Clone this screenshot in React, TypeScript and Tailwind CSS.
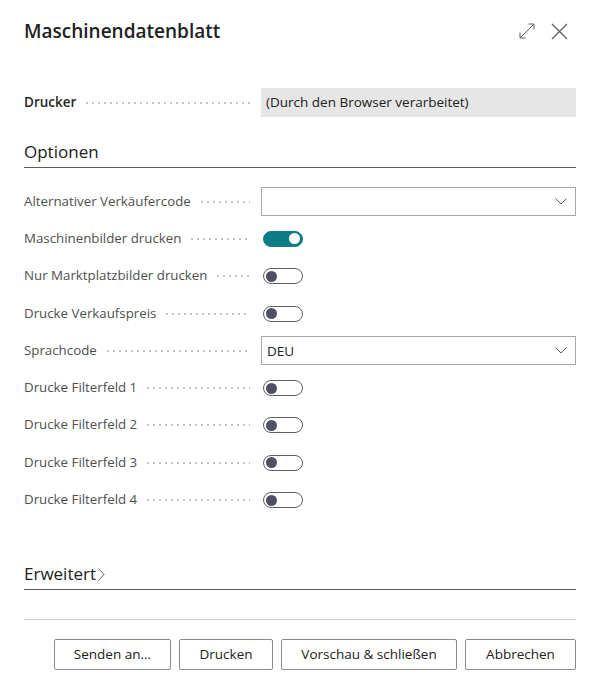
import { useState } from "react";

const font = { fontFamily: '"Segoe UI", "Open Sans", "Noto Sans", sans-serif' };

function Dots() {
  return (
    <span className="mx-2 h-[2px] flex-1 bg-[radial-gradient(circle,#c4c4c4_0.9px,transparent_1.1px)] bg-[length:6px_2px] bg-repeat-x" />
  );
}

function Label({ text, bold }: { text: string; bold?: boolean }) {
  return (
    <div className="flex w-[237px] shrink-0 items-center pr-[3px]">
      <span
        className={
          bold
            ? "text-[13.5px] font-semibold text-[#262626]"
            : "text-[13.3px] text-[#505050]"
        }
      >
        {text}
      </span>
      <Dots />
    </div>
  );
}

function Toggle({ on }: { on?: boolean }) {
  const [value, setValue] = useState(!!on);
  return (
    <button
      onClick={() => setValue(!value)}
      className={
        value
          ? "ml-[2px] flex h-[16px] w-[40px] items-center justify-end rounded-full border border-[#0e7c86] bg-[#0e7c86] px-[2px]"
          : "ml-[2px] flex h-[16px] w-[40px] items-center justify-start rounded-full border border-[#5f5f5f] bg-white px-[2px]"
      }
    >
      <span
        className={
          value
            ? "h-[11px] w-[11px] rounded-full bg-white"
            : "h-[11px] w-[11px] rounded-full bg-[#4d5263]"
        }
      />
    </button>
  );
}

function Select({ value }: { value?: string }) {
  return (
    <div className="flex h-[29px] flex-1 items-center justify-between border border-[#a8a8a8] pl-[5px] pr-[8px]">
      <span className="text-[13.5px] text-[#212121]">{value ?? ""}</span>
      <svg width="12" height="7" viewBox="0 0 12 7" fill="none">
        <path d="M0.5 0.5 L6 6 L11.5 0.5" stroke="#5f5f5f" strokeWidth="1" />
      </svg>
    </div>
  );
}

function Row({ label, children }: { label: string; children: React.ReactNode }) {
  return (
    <div className="flex h-[37.3px] items-center">
      <Label text={label} />
      {children}
    </div>
  );
}

export default function App() {
  const buttons = [
    { text: "Senden an...", w: "w-[117px]" },
    { text: "Drucken", w: "w-[94px]" },
    { text: "Vorschau & schließen", w: "w-[176px]" },
    { text: "Abbrechen", w: "w-[111px]" },
  ];

  return (
    <div style={font} className="flex h-[694px] w-[599px] flex-col bg-white pl-6 pr-[23px]">
      {/* HEADER */}
      <div className="flex items-center justify-between pt-[19px]">
        <h1 className="text-[19px] leading-[24px] font-semibold text-[#212121]">
          Maschinendatenblatt
        </h1>
        <div className="mr-[8px] flex items-center gap-[16px]">
          <svg width="16" height="16" viewBox="0 0 16 16" fill="none" stroke="#616161" strokeWidth="1">
            <path d="M1 15 L15 1 M9.5 1 H15 V6.5 M1 9.5 V15 H6.5" />
          </svg>
          <svg width="17" height="17" viewBox="0 0 17 17" fill="none" stroke="#616161" strokeWidth="1.4">
            <path d="M1 1 L16 16 M16 1 L1 16" />
          </svg>
        </div>
      </div>

      {/* DRUCKER */}
      <div className="mt-[45px] flex items-center">
        <Label text="Drucker" bold />
        <div className="flex h-[29px] flex-1 items-center bg-[#e6e6e6] pl-[5px] text-[13.5px] text-[#212121]">
          (Durch den Browser verarbeitet)
        </div>
      </div>

      {/* OPTIONEN */}
      <div className="mt-[23px] border-b border-[#5c5c5c] pb-[3px]">
        <h2 className="text-[17px] leading-[24px] text-[#212121]">Optionen</h2>
      </div>

      <div className="mt-[15px] flex flex-col">
        <Row label="Alternativer Verkäufercode">
          <Select />
        </Row>
        <Row label="Maschinenbilder drucken">
          <Toggle on />
        </Row>
        <Row label="Nur Marktplatzbilder drucken">
          <Toggle />
        </Row>
        <Row label="Drucke Verkaufspreis">
          <Toggle />
        </Row>
        <Row label="Sprachcode">
          <Select value="DEU" />
        </Row>
        <Row label="Drucke Filterfeld 1">
          <Toggle />
        </Row>
        <Row label="Drucke Filterfeld 2">
          <Toggle />
        </Row>
        <Row label="Drucke Filterfeld 3">
          <Toggle />
        </Row>
        <Row label="Drucke Filterfeld 4">
          <Toggle />
        </Row>
      </div>

      {/* ERWEITERT */}
      <div className="mt-[43px] flex items-center border-b border-[#5c5c5c] pb-[3px]">
        <h2 className="text-[17px] leading-[24px] text-[#212121]">Erweitert</h2>
        <svg className="ml-[2px] mt-[2px]" width="7" height="13" viewBox="0 0 7 13" fill="none">
          <path d="M0.5 0.5 L6 6.5 L0.5 12.5" stroke="#616161" strokeWidth="1" />
        </svg>
      </div>

      {/* FOOTER */}
      <div className="mt-[29px] border-t border-[#d1d1d1]" />
      <div className="mt-[19px] flex justify-end gap-[8px]">
        {buttons.map((b) => (
          <button
            key={b.text}
            className={`${b.w} h-[31px] rounded-[2px] border border-[#8a8a8a] bg-white text-[13.5px] text-[#212121]`}
          >
            {b.text}
          </button>
        ))}
      </div>
    </div>
  );
}
